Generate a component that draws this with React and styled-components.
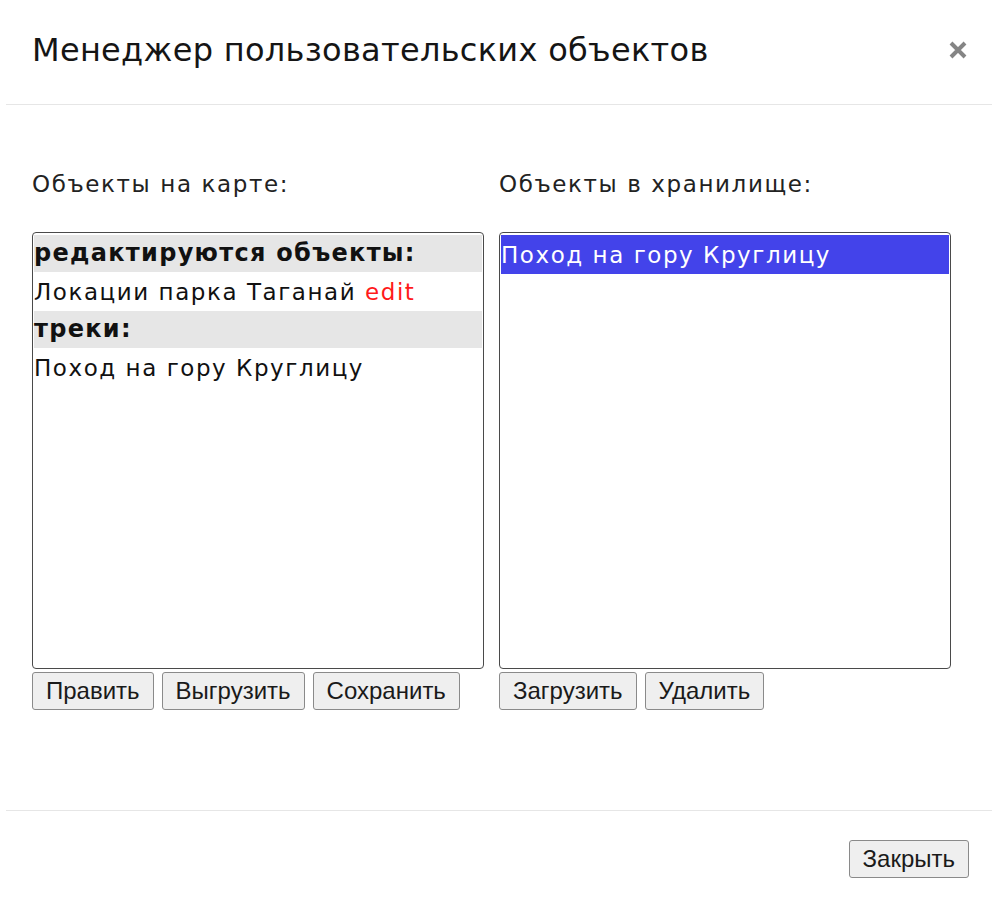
import React from "react";
import styled, { createGlobalStyle } from "styled-components";

const Global = createGlobalStyle`
  html, body { margin: 0; padding: 0; background: #ffffff; }
  * { box-sizing: border-box; }
`;

const Dialog = styled.div`
  width: 1000px;
  height: 909px;
  background: #ffffff;
  display: flex;
  flex-direction: column;
  font-family: "DejaVu Sans", "Noto Sans", sans-serif;
  color: #111;
`;

const Header = styled.div`
  height: 105px;
  margin: 0 8px 0 6px;
  padding: 0 24px 0 26px;
  border-bottom: 1px solid #e6e6e6;
  display: flex;
  align-items: center;
  justify-content: space-between;
`;

const Title = styled.h1`
  margin: 0;
  padding-bottom: 4px;
  font-family: "DejaVu Sans", "Noto Sans", sans-serif;
  font-weight: 400;
  font-size: 32px;
  letter-spacing: 0.3px;
  color: #151515;
`;

const Close = styled.button`
  border: 0;
  background: none;
  padding: 0;
  width: 20px;
  height: 20px;
  margin-bottom: 4px;
  cursor: pointer;
  display: flex;
  align-items: center;
  justify-content: center;
`;

const Body = styled.div`
  flex: 1;
  padding: 64px 0 0 32px;
  display: grid;
  grid-template-columns: 452px 452px;
  column-gap: 15px;
  align-content: start;
`;

const Column = styled.div`
  display: flex;
  flex-direction: column;
`;

const Label = styled.div`
  font-size: 23px;
  line-height: 30px;
  letter-spacing: 1.6px;
  color: #222;
  margin-bottom: 33px;
`;

const ListBox = styled.div`
  height: 437px;
  border: 1.5px solid #4a4a4a;
  border-radius: 4px;
  padding: 2px 1px;
  overflow: hidden;
`;

const Row = styled.div`
  height: ${(p) => (p.$group ? "37px" : "39px")};
  line-height: ${(p) => (p.$group ? "37px" : "40px")};
  font-size: ${(p) => (p.$group ? "24px" : "23px")};
  letter-spacing: ${(p) => (p.$group ? "1.3px" : "1.55px")};
  padding-left: 0;
  white-space: nowrap;
  font-weight: ${(p) => (p.$group ? 700 : 400)};
  background: ${(p) => (p.$group ? "#e6e6e6" : p.$selected ? "#4343ea" : "transparent")};
  color: ${(p) => (p.$selected ? "#ffffff" : "#111")};
`;

const Edit = styled.span`
  color: #ff1a1a;
`;

const Buttons = styled.div`
  display: flex;
  gap: 8px;
  margin-top: 3px;
`;

const Btn = styled.button`
  height: 38px;
  padding: 0 13px;
  font-family: "Liberation Sans", Arial, sans-serif;
  font-size: 24px;
  color: #1a1a1a;
  background: #efefef;
  border: 1px solid #8a8a8a;
  border-radius: 3px;
  cursor: pointer;
`;

const Footer = styled.div`
  height: 99px;
  margin: 0 8px 0 6px;
  border-top: 1px solid #e6e6e6;
  display: flex;
  justify-content: flex-end;
  align-items: flex-start;
  padding: 29px 23px 0 0;
`;

export default function App() {
  return (
    <>
      <Global />
      <Dialog>
        <Header>
          <Title>Менеджер пользовательских объектов</Title>
          <Close aria-label="close">
            <svg width="20" height="20" viewBox="0 0 20 20">
              <path d="M3 3 L17 17 M17 3 L3 17" stroke="#858585" strokeWidth="4" strokeLinecap="butt" />
            </svg>
          </Close>
        </Header>
        <Body>
          <Column>
            <Label>Объекты на карте:</Label>
            <ListBox>
              <Row $group>редактируются объекты:</Row>
              <Row>
                Локации парка Таганай <Edit>edit</Edit>
              </Row>
              <Row $group>треки:</Row>
              <Row>Поход на гору Круглицу</Row>
            </ListBox>
            <Buttons>
              <Btn>Править</Btn>
              <Btn>Выгрузить</Btn>
              <Btn>Сохранить</Btn>
            </Buttons>
          </Column>
          <Column>
            <Label>Объекты в хранилище:</Label>
            <ListBox>
              <Row $selected>Поход на гору Круглицу</Row>
            </ListBox>
            <Buttons>
              <Btn>Загрузить</Btn>
              <Btn>Удалить</Btn>
            </Buttons>
          </Column>
        </Body>
        <Footer>
          <Btn>Закрыть</Btn>
        </Footer>
      </Dialog>
    </>
  );
}
